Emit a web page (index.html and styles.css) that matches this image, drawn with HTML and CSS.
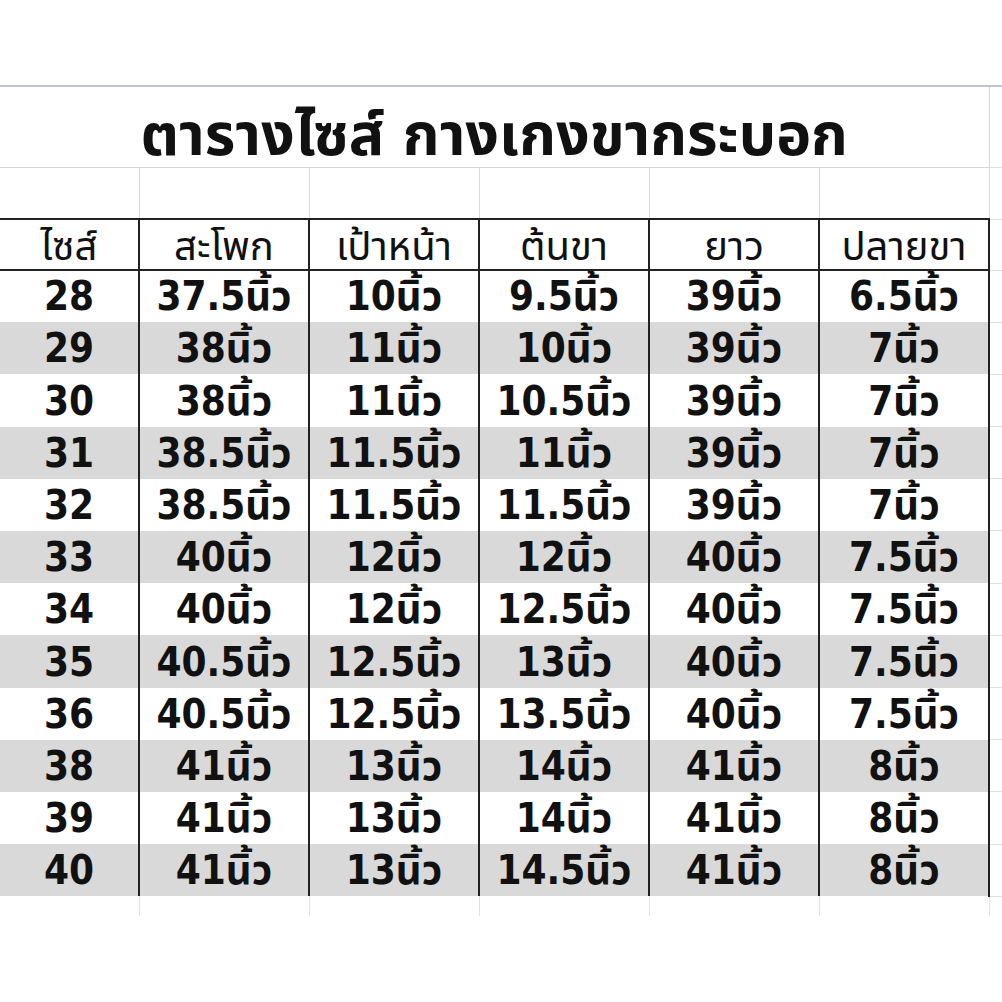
FILE: index.html
```html
<!DOCTYPE html>
<html lang="th">
<head>
<meta charset="utf-8">
<title>ตารางไซส์ กางเกงขากระบอก</title>
<link rel="stylesheet" href="styles.css">
</head>
<body>
<table class="sheet">
  <colgroup>
    <col class="c-size"><col class="c-w"><col class="c-w"><col class="c-w"><col class="c-w"><col class="c-w"><col class="c-rest">
  </colgroup>
  <tbody>
    <tr class="r-top"><td colspan="7"></td></tr>
    <tr class="r-title"><td colspan="6" class="title">ตารางไซส์ กางเกงขากระบอก</td><td class="rest"></td></tr>
    <tr class="r-blank"><td></td><td></td><td></td><td></td><td></td><td></td><td class="rest"></td></tr>
    <tr class="r-head">
      <th>ไซส์</th><th>สะโพก</th><th>เป้าหน้า</th><th>ต้นขา</th><th>ยาว</th><th>ปลายขา</th><td class="rest"></td>
    </tr>
    <tr class="r-data"><td>28</td><td>37.5นิ้ว</td><td>10นิ้ว</td><td>9.5นิ้ว</td><td>39นิ้ว</td><td>6.5นิ้ว</td><td class="rest"></td></tr>
    <tr class="r-data alt"><td>29</td><td>38นิ้ว</td><td>11นิ้ว</td><td>10นิ้ว</td><td>39นิ้ว</td><td>7นิ้ว</td><td class="rest"></td></tr>
    <tr class="r-data"><td>30</td><td>38นิ้ว</td><td>11นิ้ว</td><td>10.5นิ้ว</td><td>39นิ้ว</td><td>7นิ้ว</td><td class="rest"></td></tr>
    <tr class="r-data alt"><td>31</td><td>38.5นิ้ว</td><td>11.5นิ้ว</td><td>11นิ้ว</td><td>39นิ้ว</td><td>7นิ้ว</td><td class="rest"></td></tr>
    <tr class="r-data"><td>32</td><td>38.5นิ้ว</td><td>11.5นิ้ว</td><td>11.5นิ้ว</td><td>39นิ้ว</td><td>7นิ้ว</td><td class="rest"></td></tr>
    <tr class="r-data alt"><td>33</td><td>40นิ้ว</td><td>12นิ้ว</td><td>12นิ้ว</td><td>40นิ้ว</td><td>7.5นิ้ว</td><td class="rest"></td></tr>
    <tr class="r-data"><td>34</td><td>40นิ้ว</td><td>12นิ้ว</td><td>12.5นิ้ว</td><td>40นิ้ว</td><td>7.5นิ้ว</td><td class="rest"></td></tr>
    <tr class="r-data alt"><td>35</td><td>40.5นิ้ว</td><td>12.5นิ้ว</td><td>13นิ้ว</td><td>40นิ้ว</td><td>7.5นิ้ว</td><td class="rest"></td></tr>
    <tr class="r-data"><td>36</td><td>40.5นิ้ว</td><td>12.5นิ้ว</td><td>13.5นิ้ว</td><td>40นิ้ว</td><td>7.5นิ้ว</td><td class="rest"></td></tr>
    <tr class="r-data alt"><td>38</td><td>41นิ้ว</td><td>13นิ้ว</td><td>14นิ้ว</td><td>41นิ้ว</td><td>8นิ้ว</td><td class="rest"></td></tr>
    <tr class="r-data"><td>39</td><td>41นิ้ว</td><td>13นิ้ว</td><td>14นิ้ว</td><td>41นิ้ว</td><td>8นิ้ว</td><td class="rest"></td></tr>
    <tr class="r-data alt"><td>40</td><td>41นิ้ว</td><td>13นิ้ว</td><td>14.5นิ้ว</td><td>41นิ้ว</td><td>8นิ้ว</td><td class="rest"></td></tr>
    <tr class="r-after"><td></td><td></td><td></td><td></td><td></td><td></td><td class="rest"></td></tr>
  </tbody>
</table>
</body>
</html>
```

FILE: styles.css
```css
html, body {
  margin: 0;
  padding: 0;
  background: #ffffff;
}

body {
  font-family: Tahoma, "DejaVu Sans Condensed", "Noto Sans Thai", "DejaVu Sans", sans-serif;
  color: #111111;
  width: 1002px;
  overflow: hidden;
}

.sheet {
  width: 1002px;
  table-layout: fixed;
  border-collapse: collapse;
  border-spacing: 0;
}

.c-size { width: 139px; }
.c-w { width: 170px; }
.c-rest { width: 13px; }

.sheet td,
.sheet th {
  padding: 0;
  text-align: center;
  white-space: nowrap;
  overflow: hidden;
  box-sizing: border-box;
}

.r-top td {
  height: 86px;
  border-bottom: 2px solid #bcc6d1;
}

.r-title td {
  height: 81px;
  border-bottom: 1px solid #d6d6d6;
}

.sheet .title {
  font-weight: bold;
  font-size: 59px;
  vertical-align: bottom;
  padding-bottom: 1px;
  line-height: 1.05;
  overflow: visible;
  border-right: 1px solid #d6d6d6;
}

.r-blank td {
  height: 52px;
  border-right: 1px solid #d9d9d9;
}

.r-head th {
  height: 51px;
  font-weight: normal;
  font-size: 40px;
  line-height: 1;
  vertical-align: bottom;
  padding-bottom: 3px;
  border-top: 2px solid #222222;
  border-bottom: 2px solid #222222;
  border-left: 2px solid #222222;
  border-right: 2px solid #222222;
}

.r-head th:first-child {
  border-left: none;
}

.r-data td {
  height: 52.2px;
  font-weight: bold;
  font-size: 40px;
  line-height: 1;
  vertical-align: bottom;
  padding-bottom: 6px;
  border-left: 2px solid #222222;
  border-right: 2px solid #222222;
}

.r-data td:first-child {
  border-left: none;
}

.r-data.alt td {
  background: #d9d9d9;
}

.sheet td.rest,
.r-data.alt td.rest {
  background: #ffffff;
  border-left: 2px solid #222222;
  border-right: none;
  border-bottom: 1px solid #dedede;
}

.r-top td.rest,
.r-title td.rest,
.r-blank td.rest {
  border-left: 1px solid #d6d6d6;
}

.r-after td {
  height: 20px;
  border-right: 1px solid #e2e2e2;
}

.r-after td.rest {
  border-left: none;
  border-bottom: none;
}
```
